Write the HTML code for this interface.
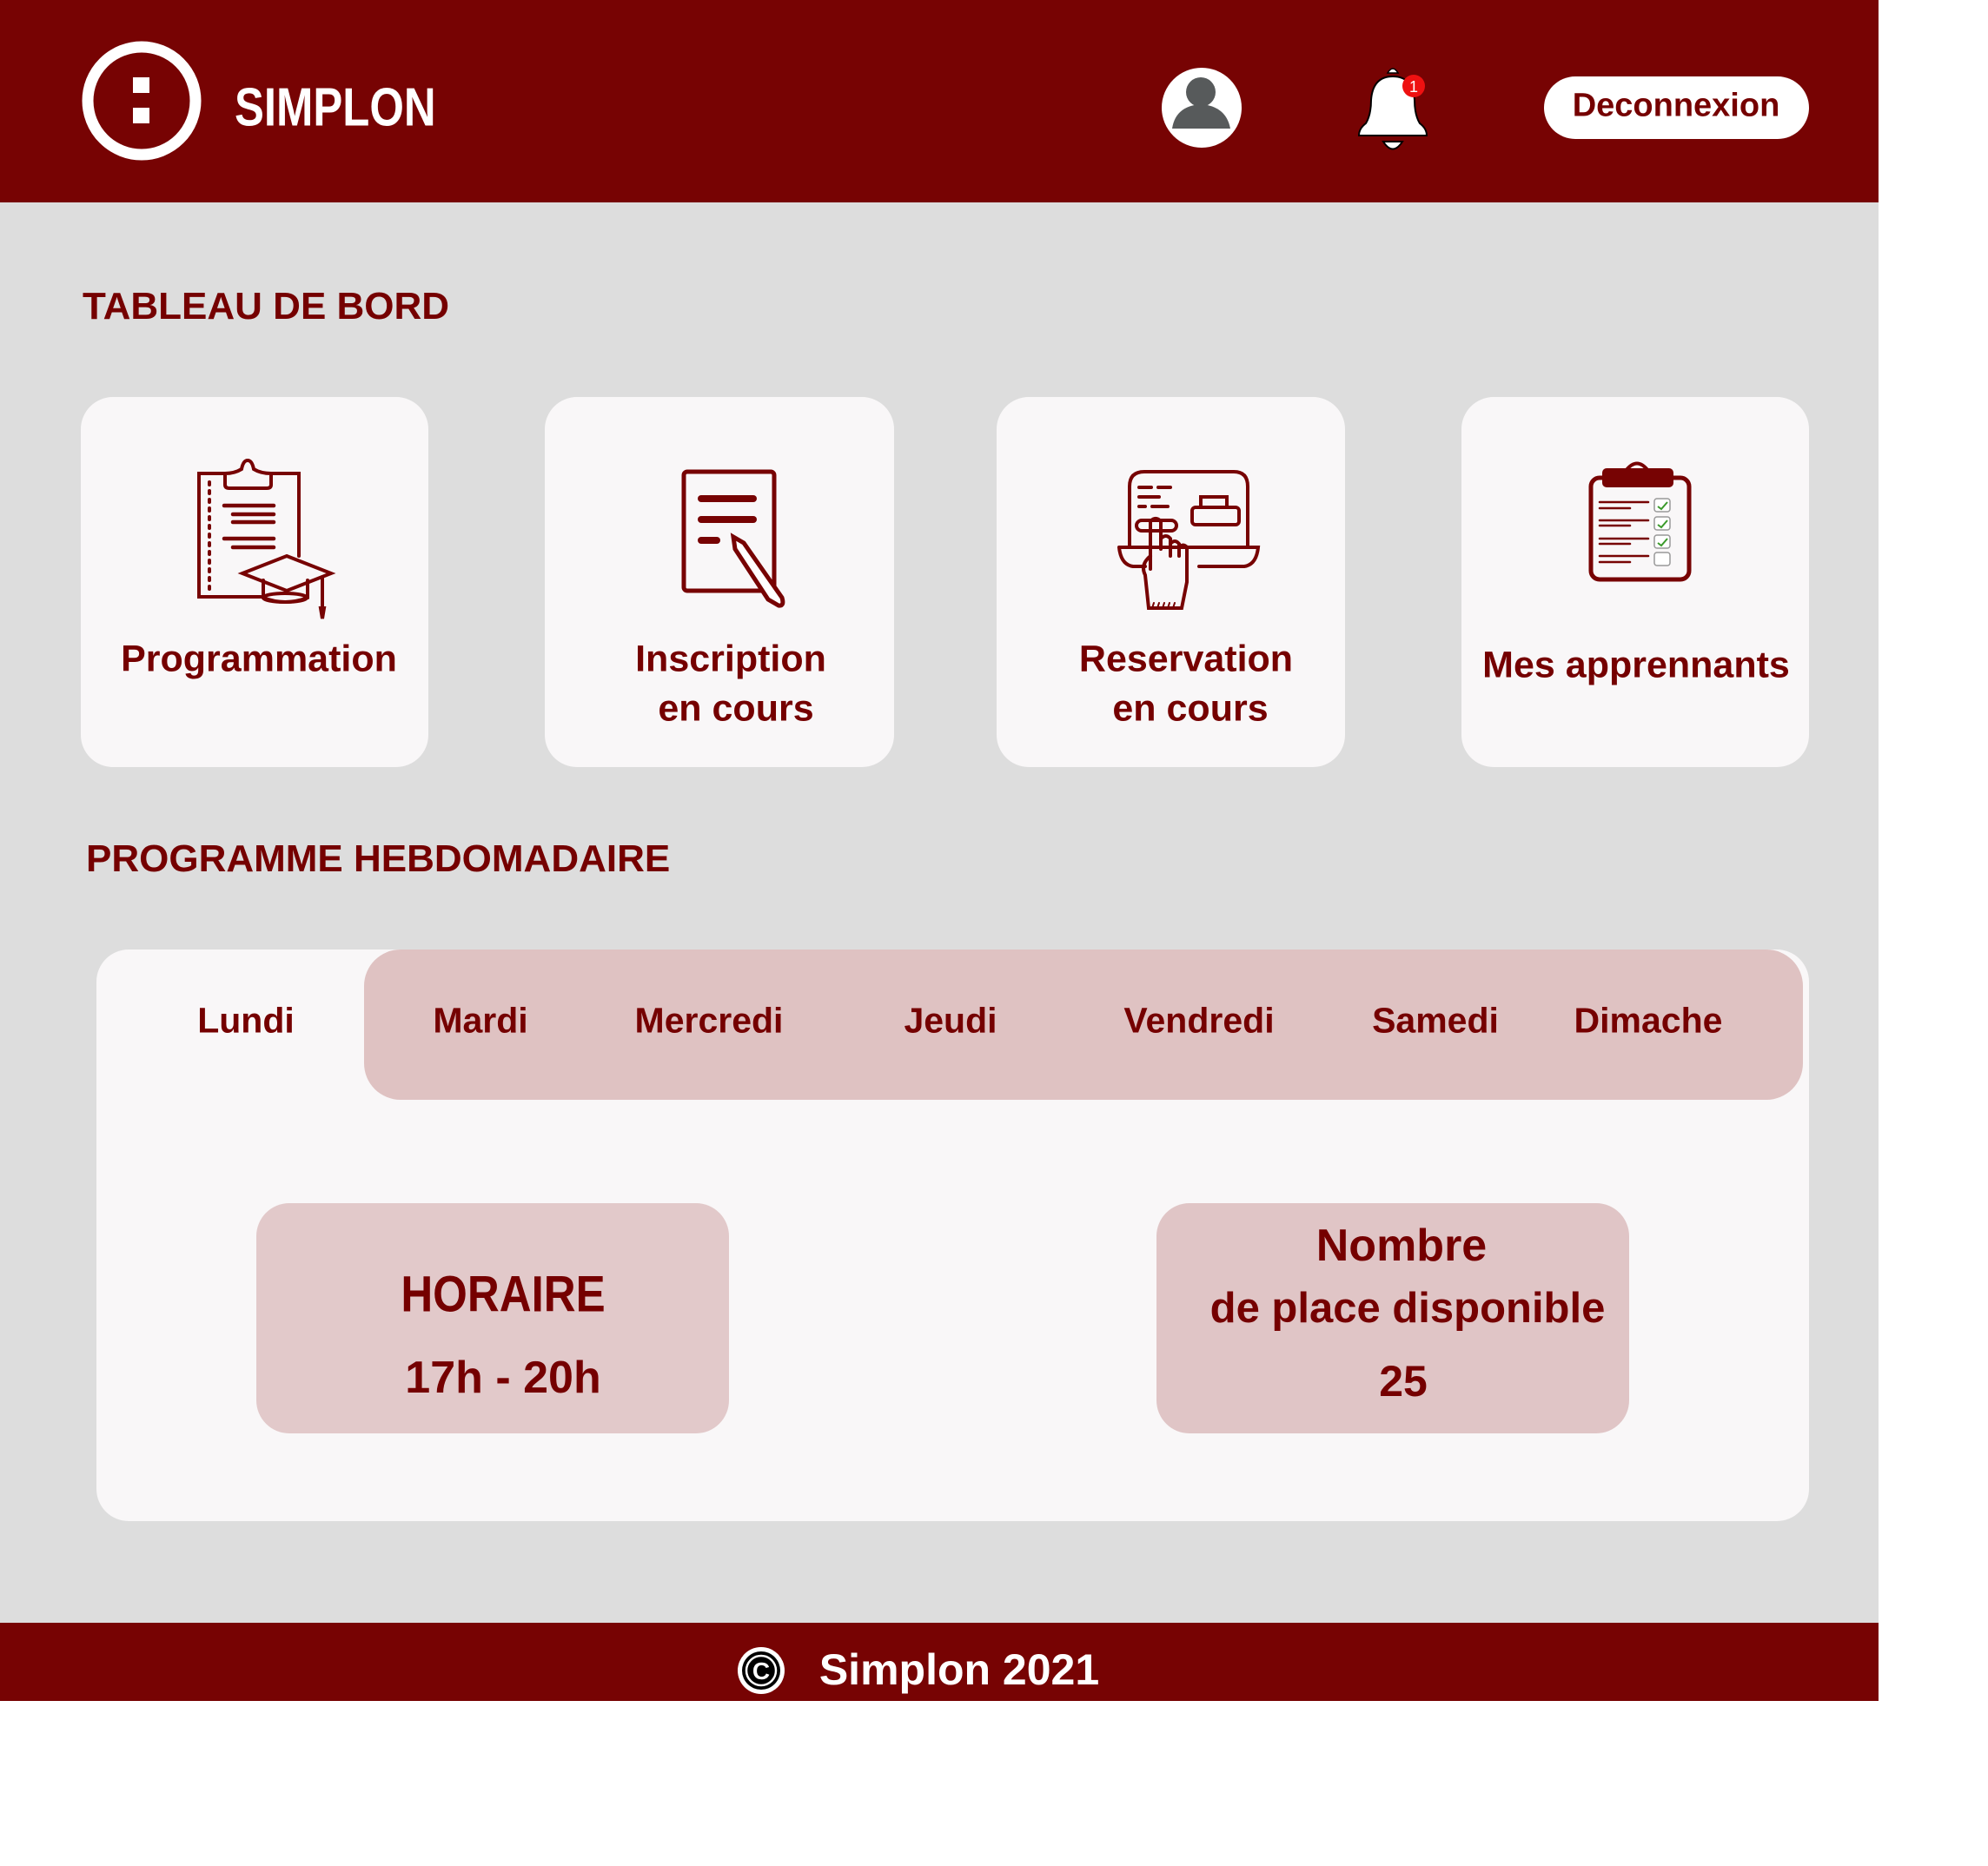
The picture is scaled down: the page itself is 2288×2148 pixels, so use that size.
<!DOCTYPE html>
<html><head><meta charset="utf-8"><style>
*{margin:0;padding:0;box-sizing:border-box}
body{width:2288px;height:2148px;background:#fff;position:relative;overflow:hidden;font-family:"Liberation Sans",sans-serif;font-weight:bold;color:#750000}
.abs{position:absolute}
#header{left:0;top:0;width:2162px;height:233px;background:#770303}
#main{left:0;top:233px;width:2162px;height:1635px;background:#dddddd}
#footer{left:0;top:1868px;width:2162px;height:90px;background:#770303}
.card{background:#f9f7f8;border-radius:37px;top:457px;height:426px}
.t{position:absolute;white-space:nowrap;transform:translate(-50%,-50%)}
.tl{position:absolute;white-space:nowrap;transform-origin:left center}
</style></head><body>
<div id="header" class="abs"></div>
<div id="main" class="abs"></div>
<div id="footer" class="abs"></div>

<div class="abs card" style="left:93px;width:400px"></div>
<div class="abs card" style="left:627px;width:402px"></div>
<div class="abs card" style="left:1147px;width:401px"></div>
<div class="abs card" style="left:1682px;width:400px"></div>

<div class="abs" style="left:111px;top:1093px;width:1971px;height:658px;background:#f9f7f8;border-radius:37px"></div>
<div class="abs" style="left:419px;top:1093px;width:1656px;height:173px;background:#dfc2c2;border-radius:42px"></div>
<div class="abs" style="left:295px;top:1385px;width:544px;height:265px;background:#e2c9ca;border-radius:38px"></div>
<div class="abs" style="left:1331px;top:1385px;width:544px;height:265px;background:#e0c5c6;border-radius:38px"></div>

<div class="abs" style="left:1777px;top:88px;width:305px;height:72px;background:#fff;border-radius:36px"></div>

<svg class="abs" style="left:0;top:0" width="2288" height="2148" viewBox="0 0 2288 2148">
 <circle cx="163" cy="116" r="62" fill="none" stroke="#fff" stroke-width="13"/>
 <rect x="153" y="89" width="19" height="18" fill="#fff"/>
 <rect x="153" y="124" width="19" height="18" fill="#fff"/>
 <circle cx="1383" cy="124" r="46" fill="#fff"/>
 <circle cx="1382" cy="106" r="17" fill="#575a5b"/>
 <path d="M1349 148 Q1353 122 1382 120 Q1411 122 1416 148 Z" fill="#575a5b"/>
 <path d="M1597 84 Q1603 74 1609 84 Z" fill="#fff" stroke="#000" stroke-width="1.5"/>
 <path d="M1592 163 Q1603 180 1614 163 Z" fill="#fff" stroke="#000" stroke-width="2"/>
 <path d="M1564 156 Q1564 148 1572 142 Q1578 132 1578 115 Q1580 88 1603 88 Q1626 88 1628 115 Q1628 132 1634 142 Q1642 148 1642 156 Z" fill="#fff" stroke="#000" stroke-width="2"/>
 <circle cx="1627" cy="99" r="13" fill="#ee1111"/>
 <text x="1627" y="106" fill="#fff" font-size="18" font-family="Liberation Sans" font-weight="normal" text-anchor="middle">1</text>
 <circle cx="876" cy="1923" r="27" fill="#fff"/>
 <circle cx="876" cy="1923" r="22" fill="#000"/>
 <circle cx="876" cy="1923" r="17" fill="none" stroke="#fff" stroke-width="2.5"/>
 <text x="876" y="1933" fill="#fff" font-size="28" font-family="Liberation Sans" text-anchor="middle">C</text>

 <g fill="none" stroke="#770303" stroke-width="4" stroke-linecap="round">
 <path d="M300 687 H229 V545 H259 M312 545 H344 V640"/>
 <path d="M259 545 V558 Q259 562 264 562 H307 Q312 562 312 558 V545 Q300 545 292 540 Q290 530 285 530 Q280 530 278 540 Q270 545 259 545"/>
 <line x1="241" y1="555" x2="241" y2="680" stroke-dasharray="3 7"/>
 <g stroke-width="4.5"><line x1="258" y1="582" x2="315" y2="582"/><line x1="268" y1="592" x2="315" y2="592"/><line x1="268" y1="601" x2="315" y2="601"/><line x1="258" y1="620" x2="315" y2="620"/><line x1="268" y1="630" x2="315" y2="630"/></g>
 <path d="M330 640 L381 660 L330 680 L279 660 Z"/>
 <path d="M303 668 V688 Q328 698 354 688 V668"/>
 <ellipse cx="328" cy="688" rx="25" ry="5"/>
 <line x1="371" y1="664" x2="371" y2="705"/>
 <path d="M369 700 L371 712 L373 700 Z" fill="#770303"/>
 <rect x="787" y="543" width="104" height="137" rx="4" stroke-width="5"/>
 <g stroke-width="8"><line x1="807" y1="574" x2="867" y2="574"/><line x1="807" y1="598" x2="867" y2="598"/><line x1="807" y1="622" x2="825" y2="622"/></g>
 <path d="M844 618 L856 625 L900 688 Q903 698 896 697 L884 690 L846 632 Z" fill="#fff" stroke-width="5"/>
 <path d="M1300 630 V560 Q1300 543 1317 543 H1420 Q1436 543 1436 560 V630" stroke-width="4"/>
 <path d="M1288 630 H1448 Q1446 650 1432 652 H1380 M1318 652 H1304 Q1290 650 1288 630"/>
 <g stroke-width="4"><line x1="1311" y1="561" x2="1325" y2="561"/><line x1="1333" y1="561" x2="1347" y2="561"/><line x1="1311" y1="572" x2="1334" y2="572"/><line x1="1311" y1="583" x2="1318" y2="583"/><line x1="1326" y1="583" x2="1344" y2="583"/></g>
 <rect x="1372" y="584" width="54" height="20" rx="4"/>
 <rect x="1382" y="572" width="30" height="12"/>
 <rect x="1308" y="599" width="46" height="12" rx="6"/>
 <path d="M1324 655 V600 Q1330 594 1336 600 V632 M1336 620 Q1342 614 1347 620 V640 M1347 626 Q1352 620 1357 626 V640 M1357 630 Q1362 625 1366 630 V670 L1360 700 H1322 L1318 662 Q1312 650 1324 640"/>
 <path d="M1326 700 l2 -6 M1332 700 l2 -6 M1338 700 l2 -6 M1344 700 l2 -6 M1350 700 l2 -6" stroke-width="2"/>
 <rect x="1831" y="550" width="113" height="117" rx="10" stroke-width="5"/>
 <path d="M1871 542 Q1884 525 1897 542"/>
 <g stroke-width="2.5"><line x1="1841" y1="578" x2="1897" y2="578"/><line x1="1841" y1="585" x2="1876" y2="585"/><line x1="1841" y1="599" x2="1897" y2="599"/><line x1="1841" y1="605" x2="1876" y2="605"/><line x1="1841" y1="620" x2="1897" y2="620"/><line x1="1841" y1="626" x2="1876" y2="626"/><line x1="1841" y1="640" x2="1897" y2="640"/><line x1="1841" y1="647" x2="1876" y2="647"/></g>
 </g>
 <rect x="1844" y="539" width="82" height="22" rx="5" fill="#770303"/>
 <g fill="#fff" stroke="#999" stroke-width="1.5"><rect x="1904" y="574" width="18" height="15" rx="3"/><rect x="1904" y="595" width="18" height="15" rx="3"/><rect x="1904" y="616" width="18" height="15" rx="3"/><rect x="1904" y="636" width="18" height="15" rx="3"/></g>
 <g fill="none" stroke="#3a9a2a" stroke-width="2"><path d="M1908 583 l4 3 l7 -8"/><path d="M1908 604 l4 3 l7 -8"/><path d="M1908 625 l4 3 l7 -8"/></g>
</svg>

<div class="tl" style="left:270px;top:124px;color:#fff;font-size:62px;transform:translateY(-50%) scaleX(0.82)">SIMPLON</div>
<div class="t" style="left:1929px;top:122px;font-size:38px">Deconnexion</div>

<div class="tl" style="left:95px;top:353px;font-size:44px;transform:translateY(-50%)">TABLEAU DE BORD</div>
<div class="tl" style="left:99px;top:989px;font-size:44px;transform:translateY(-50%)">PROGRAMME HEBDOMADAIRE</div>

<div class="t" style="left:298px;top:759px;font-size:43px">Programmation</div>
<div class="t" style="left:841px;top:759px;font-size:43px">Inscription</div>
<div class="t" style="left:847px;top:816px;font-size:43px">en cours</div>
<div class="t" style="left:1365px;top:759px;font-size:43px">Reservation</div>
<div class="t" style="left:1370px;top:816px;font-size:43px">en cours</div>
<div class="t" style="left:1883px;top:766px;font-size:43px">Mes apprennants</div>

<div class="t" style="left:283px;top:1175px;font-size:41px">Lundi</div>
<div class="t" style="left:553px;top:1175px;font-size:41px">Mardi</div>
<div class="t" style="left:816px;top:1175px;font-size:41px">Mercredi</div>
<div class="t" style="left:1094px;top:1175px;font-size:41px">Jeudi</div>
<div class="t" style="left:1380px;top:1175px;font-size:41px">Vendredi</div>
<div class="t" style="left:1652px;top:1175px;font-size:41px">Samedi</div>
<div class="t" style="left:1897px;top:1175px;font-size:41px">Dimache</div>

<div class="t" style="left:579px;top:1490px;font-size:58px;transform:translate(-50%,-50%) scaleX(0.88)">HORAIRE</div>
<div class="t" style="left:579px;top:1586px;font-size:52px">17h - 20h</div>
<div class="t" style="left:1613px;top:1434px;font-size:52px">Nombre</div>
<div class="t" style="left:1620px;top:1506px;font-size:49px">de place disponible</div>
<div class="t" style="left:1615px;top:1590px;font-size:50px">25</div>

<div class="t" style="left:1104px;top:1922px;font-size:50px;color:#fff">Simplon 2021</div>
</body></html>
